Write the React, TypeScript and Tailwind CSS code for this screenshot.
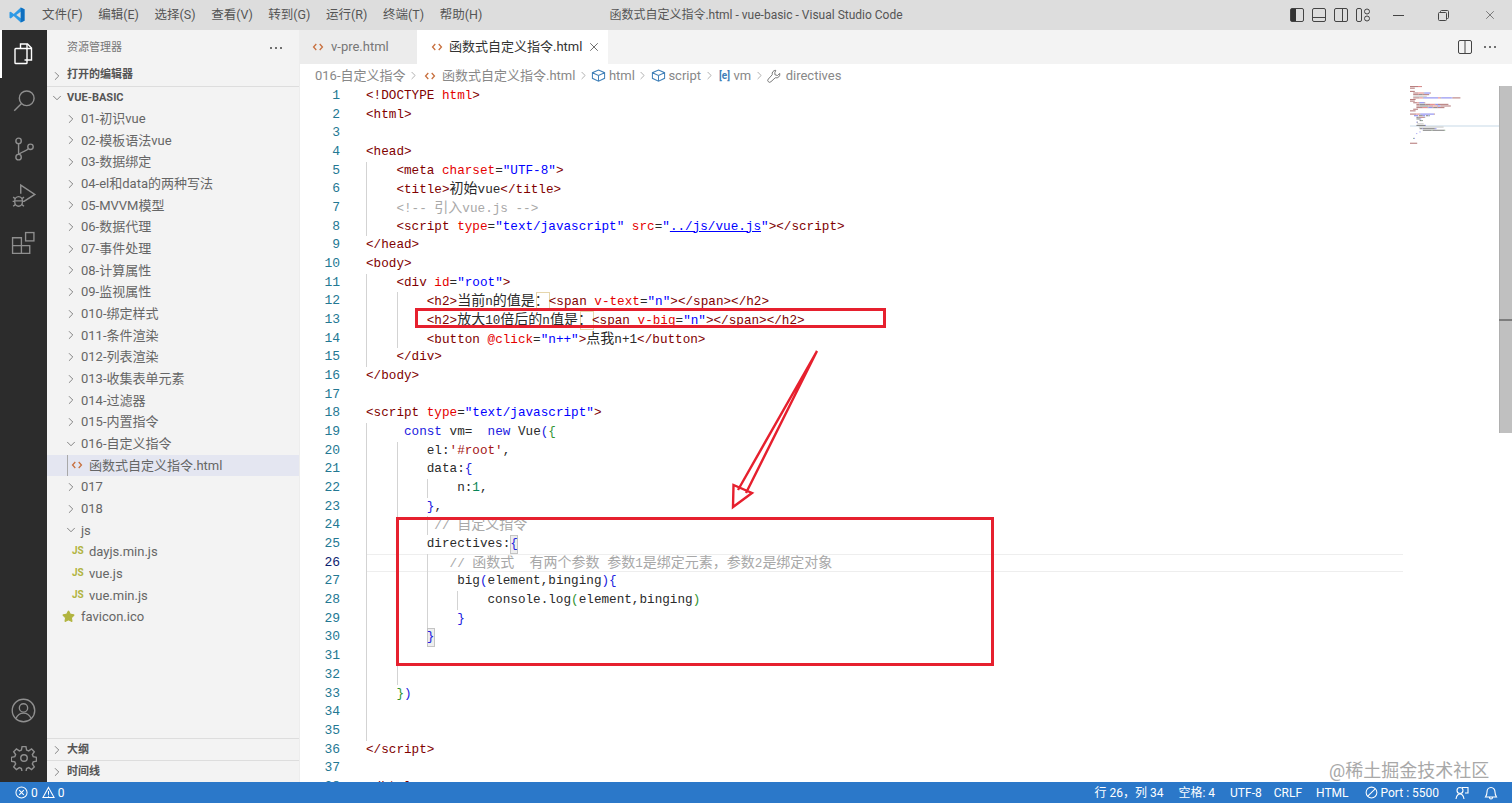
import { ChevronDown, ChevronRight, Star, X } from 'lucide-react';

const TAG = 'text-[#800000]';
const ATTR = 'text-[#e50000]';
const VAL = 'text-[#0000ff]';
const TXT = 'text-[#2a2a2a]';
const COM = 'text-[#a8a8a8]';
const KW = 'text-[#2020e0]';
const STR = 'text-[#a31515]';
const NUM = 'text-[#098658]';
const GRN = 'text-[#319331]';
const LNK = 'text-[#0000ff] underline';

type Tok = [string, string];
type Line = { t?: Tok[]; g?: number[]; box?: 'colon12' | 'colon13' | 'open' | 'close'; cur?: boolean };

const codeLines: Line[] = [
  { t: [['<!DOCTYPE ', TAG], ['html', ATTR], ['>', TAG]] },
  { t: [['<html>', TAG]] },
  {},
  { t: [['<head>', TAG]] },
  { g: [0], t: [['    <meta ', TAG], ['charset', ATTR], ['=', TXT], ['"UTF-8"', VAL], ['>', TAG]] },
  { g: [0], t: [['    <title>', TAG], ['初始vue', TXT], ['</title>', TAG]] },
  { g: [0], t: [['    <!-- 引入vue.js -->', COM]] },
  { g: [0], t: [['    <script ', TAG], ['type', ATTR], ['=', TXT], ['"text/javascript" ', VAL], ['src', ATTR], ['=', TXT], ['"', VAL], ['../js/vue.js', LNK], ['"', VAL], ['></script>', TAG]] },
  { t: [['</head>', TAG]] },
  { t: [['<body>', TAG]] },
  { g: [0], t: [['    <div ', TAG], ['id', ATTR], ['=', TXT], ['"root"', VAL], ['>', TAG]] },
  { g: [0, 31], box: 'colon12', t: [['        <h2>', TAG], ['当前n的值是：', TXT], ['<span ', TAG], ['v-text', ATTR], ['=', TXT], ['"n"', VAL], ['></span></h2>', TAG]] },
  { g: [0, 31], box: 'colon13', t: [['        <h2>', TAG], ['放大10倍后的n值是：', TXT], ['<span ', TAG], ['v-big', ATTR], ['=', TXT], ['"n"', VAL], ['></span></h2>', TAG]] },
  { g: [0, 31], t: [['        <button ', TAG], ['@click', ATTR], ['=', TXT], ['"n++"', VAL], ['>', TAG], ['点我n+1', TXT], ['</button>', TAG]] },
  { g: [0], t: [['    </div>', TAG]] },
  { t: [['</body>', TAG]] },
  {},
  { t: [['<script ', TAG], ['type', ATTR], ['=', TXT], ['"text/javascript"', VAL], ['>', TAG]] },
  { g: [0], t: [['     ', TXT], ['const', KW], [' vm=  ', TXT], ['new', KW], [' Vue', TXT], ['(', KW], ['{', GRN]] },
  { g: [0, 31], t: [['        el:', TXT], ["'#root'", STR], [',', TXT]] },
  { g: [0, 31], t: [['        data:', TXT], ['{', KW]] },
  { g: [0, 31, 61], t: [['            n:', TXT], ['1', NUM], [',', TXT]] },
  { g: [0, 31], t: [['        ', TXT], ['}', KW], [',', TXT]] },
  { g: [0, 31, 61], t: [['         // 自定义指令', COM]] },
  { g: [0, 31], box: 'open', t: [['        directives:', TXT], ['{', KW]] },
  { g: [0, 31, 61], cur: true, t: [['           // 函数式  有两个参数 参数1是绑定元素，参数2是绑定对象', COM]] },
  { g: [0, 31, 61], t: [['            big', TXT], ['(', KW], ['element,binging', TXT], [')', KW], ['{', KW]] },
  { g: [0, 31, 61, 91], t: [['                console.log', TXT], ['(', GRN], ['element,binging', TXT], [')', GRN]] },
  { g: [0, 31, 61], t: [['            ', TXT], ['}', KW]] },
  { g: [0, 31], box: 'close', t: [['        ', TXT], ['}', KW]] },
  { g: [0, 31] },
  { g: [0, 31] },
  { g: [0], t: [['    ', TXT], ['}', GRN], [')', KW]] },
  { g: [0] },
  { g: [0] },
  { t: [['</script>', TAG]] },
  {},
  { t: [['</html>', TAG]] },
];

const minimapColors: Record<string, string> = {
  [TAG]: '#b88080',
  [ATTR]: '#e88a8a',
  [VAL]: '#8a8af0',
  [TXT]: '#8a8a8a',
  [COM]: '#cccccc',
  [KW]: '#8a8af0',
  [STR]: '#c08a8a',
  [NUM]: '#80a890',
  [GRN]: '#80a880',
  [LNK]: '#8a8af0',
};

const boxes = {
  colon12: 'left-[170px] w-[14px] border-[#e6d6ac]',
  colon13: 'left-[214px] w-[14px] border-[#e6d6ac]',
  open: 'left-[144px] w-[8px] border-[#c4c4c4] bg-[#eeeeee]',
  close: 'left-[61px] w-[8px] border-[#c4c4c4] bg-[#eeeeee]',
};

const guideLeft: Record<number, string> = {
  0: 'left-0',
  31: 'left-[31px]',
  61: 'left-[61px]',
  91: 'left-[91px]',
};

function CodeText({ text, color }: { text: string; color: string }) {
  const parts = text.split(/([\u3400-\u9fff\u3000-\u303f\uff00-\uffef]+)/);
  return (
    <span className={color}>
      {parts.map((p, i) =>
        i % 2 === 1 ? (
          <span key={i} className="text-[14px]">
            {p}
          </span>
        ) : (
          p
        ),
      )}
    </span>
  );
}

function Angle({ className = '' }: { className?: string }) {
  return (
    <svg viewBox="0 0 14 14" className={`w-[12px] h-[12px] shrink-0 ${className}`} fill="none" stroke="#c8703f" strokeWidth="1.5">
      <path d="M5 3.5 1.8 7 5 10.5M9 3.5 12.2 7 9 10.5" />
    </svg>
  );
}

function Cube() {
  return (
    <svg viewBox="0 0 16 16" className="w-[15px] h-[15px] shrink-0 mr-[1px]" fill="none" stroke="#4080b8" strokeWidth="1.1">
      <path d="M8 2.2 14.5 5v6L8 14 1.5 11V5zM1.5 5 8 8l6.5-3M8 8v6" />
    </svg>
  );
}

function Crumb() {
  return <ChevronRight size={13} strokeWidth={1.2} className="text-[#888888] shrink-0" />;
}

function Dots() {
  return (
    <div className="flex gap-[3px]">
      <span className="w-[2px] h-[2px] rounded-full bg-[#444444]" />
      <span className="w-[2px] h-[2px] rounded-full bg-[#444444]" />
      <span className="w-[2px] h-[2px] rounded-full bg-[#444444]" />
    </div>
  );
}

function ExplorerFolder({ label, open }: { label: string; open?: boolean }) {
  return (
    <div className="h-[21.67px] flex items-center pl-[17px] text-[13px] text-[#666666]">
      {open ? (
        <ChevronDown size={14} strokeWidth={1.2} className="text-[#555555] shrink-0" />
      ) : (
        <ChevronRight size={14} strokeWidth={1.2} className="text-[#555555] shrink-0" />
      )}
      <span className="ml-[3px]">{label}</span>
    </div>
  );
}

function JsFile({ label }: { label: string }) {
  return (
    <div className="h-[21.67px] flex items-center pl-[25px] text-[13px] text-[#666666]">
      <span className="w-[17px] text-[10px] font-bold text-[#b1b43f] -mt-[2px]">JS</span>
      <span>{label}</span>
    </div>
  );
}

function SectionHead({ label, open, border }: { label: string; open?: boolean; border?: boolean }) {
  return (
    <div className={`h-[22px] shrink-0 flex items-center pl-[3px] pt-[1px] text-[11px] font-bold text-[#555555] ${border ? 'border-t border-[#dddddd]' : ''}`}>
      {open ? (
        <ChevronDown size={14} strokeWidth={1.2} className="text-[#555555] shrink-0" />
      ) : (
        <ChevronRight size={14} strokeWidth={1.2} className="text-[#555555] shrink-0" />
      )}
      <span className="ml-[3px]">{label}</span>
    </div>
  );
}

function ActivityIcon({ children, active }: { children: React.ReactNode; active?: boolean }) {
  return (
    <div className={`h-[47.5px] w-[47px] flex items-center justify-center ${active ? 'border-l-2 border-white pr-[2px]' : ''}`}>
      {children}
    </div>
  );
}

const folders1 = ['01-初识vue', '02-模板语法vue', '03-数据绑定', '04-el和data的两种写法', '05-MVVM模型', '06-数据代理', '07-事件处理', '08-计算属性', '09-监视属性', '010-绑定样式', '011-条件渲染', '012-列表渲染', '013-收集表单元素', '014-过滤器', '015-内置指令'];
const menus = ['文件(F)', '编辑(E)', '选择(S)', '查看(V)', '转到(G)', '运行(R)', '终端(T)', '帮助(H)'];

function Minimap() {
  return (
    <svg viewBox="0 0 90 66" className="absolute left-[1410px] top-[85px] w-[90px] h-[66px]">
      <rect x="0" y="40.2" width="90" height="1.6" fill="#dce8f0" />
      {codeLines.slice(0, 37).map((line, i) => {
        let x = 0;
        return (line.t ?? []).map(([text, color], j) => {
          const lead = text.length - text.trimStart().length;
          const r = (
            <rect key={`${i}-${j}`} x={x + lead * 0.8} y={i * 1.62 + 1} width={(text.length - lead) * 0.8} height={1.1} fill={minimapColors[color]} />
          );
          x += text.length * 0.8;
          return r;
        });
      })}
    </svg>
  );
}

export default function App() {
  return (
    <div className="relative w-full h-screen flex flex-col overflow-hidden bg-white font-['Roboto','Noto_Sans_CJK_SC',sans-serif]">
      {/* Title bar */}
      <div className="h-[30px] shrink-0 bg-[#dddddd] flex items-center relative">
        <svg viewBox="0 0 24 24" className="ml-[8px] w-[18px] h-[18px] shrink-0">
          <path d="M17 2 22 4.4v15.2L17 22 7.6 13.4 3.6 16.5 2 15.7V8.3l1.6-.8 4 3.1z" fill="#2f9ae6" />
          <path d="M17 7.6 11 12l6 4.4z" fill="#dddddd" />
          <path d="M17 2 22 4.4v15.2L17 22z" fill="#0f6fbf" />
        </svg>
        <div className="ml-[16px] flex gap-[15.6px] text-[12.5px] text-[#555555]">
          {menus.map((m) => (
            <span key={m}>{m}</span>
          ))}
        </div>
        <div className="absolute left-0 right-0 text-center text-[12px] text-[#555555]">函数式自定义指令.html - vue-basic - Visual Studio Code</div>
        <div className="ml-auto flex items-center text-[#444444]">
          <div className="flex items-center gap-[8px] mr-[23px]">
            <svg viewBox="0 0 14 14" className="w-[14px] h-[14px]" fill="none" stroke="currentColor">
              <rect x=".5" y=".5" width="13" height="13" rx="1.5" />
              <rect x="1" y="1" width="5" height="12" fill="#333333" stroke="none" />
            </svg>
            <svg viewBox="0 0 14 14" className="w-[14px] h-[14px]" fill="none" stroke="currentColor">
              <rect x=".5" y=".5" width="13" height="13" rx="1.5" />
              <path d="M1 9.5h12" />
            </svg>
            <svg viewBox="0 0 14 14" className="w-[14px] h-[14px]" fill="none" stroke="currentColor">
              <rect x=".5" y=".5" width="13" height="13" rx="1.5" />
              <path d="M8.5 1v12" />
            </svg>
            <svg viewBox="0 0 14 14" className="w-[14px] h-[14px]" fill="none" stroke="currentColor">
              <rect x=".5" y=".5" width="5" height="13" rx="1.5" />
              <circle cx="11" cy="3.5" r="2.5" />
              <circle cx="11" cy="10.5" r="2.5" />
            </svg>
          </div>
          <div className="w-[11px] h-[1px] bg-[#444444] mr-[34px]" />
          <svg viewBox="0 0 11 11" className="w-[11px] h-[11px] mr-[34px]" fill="none" stroke="currentColor">
            <rect x=".5" y="2.5" width="8" height="8" rx="1" />
            <path d="M2.5 2.5V1.5a1 1 0 0 1 1-1h6a1 1 0 0 1 1 1v6a1 1 0 0 1-1 1h-1" />
          </svg>
          <X size={14} strokeWidth={1.1} className="mr-[15px]" />
        </div>
      </div>

      <div className="flex-1 flex min-h-0">
        {/* Activity bar */}
        <div className="w-[47px] shrink-0 bg-[#2c2c2c] flex flex-col text-[#8f8f8f]">
          <div>
            <ActivityIcon active>
              <svg viewBox="0 0 24 24" className="w-[24px] h-[24px]" fill="none" stroke="#ffffff" strokeWidth="1.4">
                <path d="M8.5 6.5V2h7l4 4v12h-7" />
                <path d="M15 2v4.5h4.5" />
                <rect x="3" y="6.5" width="12" height="15" rx=".8" />
              </svg>
            </ActivityIcon>
            <ActivityIcon>
              <svg viewBox="0 0 24 24" className="w-[26px] h-[26px]" fill="none" stroke="currentColor" strokeWidth="1.3">
                <circle cx="14.5" cy="9.5" r="6.8" />
                <path d="M9.5 14.5 3 21" />
              </svg>
            </ActivityIcon>
            <ActivityIcon>
              <svg viewBox="0 0 24 24" className="w-[26px] h-[26px]" fill="none" stroke="currentColor" strokeWidth="1.3">
                <circle cx="7" cy="4.5" r="2.5" />
                <circle cx="7" cy="19.5" r="2.5" />
                <circle cx="18" cy="10" r="2.5" />
                <path d="M7 7v10M16 11.5c-1 2.5-5 2-9 5.5" />
              </svg>
            </ActivityIcon>
            <ActivityIcon>
              <svg viewBox="0 0 24 24" className="w-[26px] h-[26px]" fill="none" stroke="currentColor" strokeWidth="1.3">
                <path d="M9 10V2l13 8.5L12 17" />
                <ellipse cx="7" cy="17" rx="3.6" ry="4.4" />
                <path d="M4 14.5 2 13M10 14.5l2-1.5M3.5 17H1.5M10.5 17h2M4 20l-2 1.5M10 20l2 1.5M3.6 16.5h6.8" />
              </svg>
            </ActivityIcon>
            <ActivityIcon>
              <svg viewBox="0 0 24 24" className="w-[25px] h-[25px]" fill="none" stroke="currentColor" strokeWidth="1.3">
                <path d="M1.5 6.5h8.5v15H1.5zM1.5 14h16.5v7.5H10" />
                <rect x="14" y="1.5" width="8" height="8" />
              </svg>
            </ActivityIcon>
          </div>
          <div className="mt-auto">
            <ActivityIcon>
              <svg viewBox="0 0 24 24" className="w-[25px] h-[25px]" fill="none" stroke="currentColor" strokeWidth="1.3">
                <circle cx="12" cy="12" r="10.8" />
                <circle cx="12" cy="9.5" r="4" />
                <path d="M4.8 19.5c1.5-3.5 4-5 7.2-5s5.7 1.5 7.2 5" />
              </svg>
            </ActivityIcon>
            <ActivityIcon>
              <svg viewBox="0 0 24 24" className="w-[26px] h-[26px]" fill="none" stroke="currentColor" strokeWidth="1.3">
                <circle cx="12" cy="12" r="3" />
                <path d="M10.2 1.5h3.6l.6 3.2 1.9.8 2.7-1.8 2.5 2.5-1.8 2.7.8 1.9 3 .6v3.6l-3 .6-.8 1.9 1.8 2.7-2.5 2.5-2.7-1.8-1.9.8-.6 3h-3.6l-.6-3-1.9-.8-2.7 1.8-2.5-2.5 1.8-2.7-.8-1.9-3.2-.6v-3.6l3.2-.6.8-1.9-1.8-2.7 2.5-2.5 2.7 1.8 1.9-.8z" />
              </svg>
            </ActivityIcon>
          </div>
        </div>

        {/* Sidebar */}
        <div className="w-[252px] shrink-0 bg-[#f3f3f3] flex flex-col">
          <div className="h-[34px] shrink-0 flex items-center justify-between pl-[20px] pr-[17px] pt-[2px] text-[11px] text-[#777777]">
            <span>资源管理器</span>
            <Dots />
          </div>
          <SectionHead label="打开的编辑器" />
          <SectionHead label="VUE-BASIC" open border />
          <div className="flex-1 min-h-0 overflow-hidden">
            {folders1.map((f) => (
              <ExplorerFolder key={f} label={f} />
            ))}
            <ExplorerFolder label="016-自定义指令" open />
            <div className="relative h-[21.67px] flex items-center pl-[24px] text-[13px] text-[#666666] bg-[#e4e6f1]">
              <span className="absolute left-[20px] top-0 bottom-0 w-px bg-[#a8a8a8]" />
              <Angle className="mr-[6px]" />
              <span>函数式自定义指令.html</span>
            </div>
            <ExplorerFolder label="017" />
            <ExplorerFolder label="018" />
            <ExplorerFolder label="js" open />
            <JsFile label="dayjs.min.js" />
            <JsFile label="vue.js" />
            <JsFile label="vue.min.js" />
            <div className="h-[21.67px] flex items-center pl-[15px] text-[13px] text-[#666666]">
              <Star size={13} fill="#b1b43f" stroke="#b1b43f" className="mr-[6px] -mt-[1px]" />
              <span>favicon.ico</span>
            </div>
          </div>
          <SectionHead label="大纲" border />
          <SectionHead label="时间线" border />
        </div>

        {/* Editor column */}
        <div className="flex-1 min-w-0 flex flex-col border-l border-[#ededed]">
          <div className="h-[34px] shrink-0 bg-[#f3f3f3] flex items-stretch">
            <div className="w-[117px] bg-[#ececec] flex items-center pl-[12px] text-[13px] text-[#777777]">
              <Angle className="mr-[7px]" />
              <span>v-pre.html</span>
            </div>
            <div className="w-[191px] bg-white flex items-center pl-[14px] text-[13px] text-[#333333]">
              <Angle className="mr-[6px]" />
              <span>函数式自定义指令.html</span>
              <X size={14} strokeWidth={1.3} className="ml-[5px] text-[#424242]" />
            </div>
            <div className="ml-auto flex items-center pr-[16px]">
              <svg viewBox="0 0 14 14" className="w-[14px] h-[14px] text-[#444444] mr-[12px]" fill="none" stroke="currentColor">
                <rect x=".5" y=".5" width="13" height="13" rx="1.5" />
                <path d="M7 1v12" />
              </svg>
              <Dots />
            </div>
          </div>

          <div className="h-[23px] shrink-0 flex items-center pl-[15px] gap-[1.5px] text-[13px] text-[#888888] whitespace-nowrap">
            <span>016-自定义指令</span>
            <Crumb />
            <Angle className="ml-[2px] mr-[5px]" />
            <span>函数式自定义指令.html</span>
            <Crumb />
            <Cube />
            <span>html</span>
            <Crumb />
            <Cube />
            <span>script</span>
            <Crumb />
            <span className="text-[10px] font-bold text-[#4080b8] mx-[2px]">[e]</span>
            <span>vm</span>
            <Crumb />
            <svg viewBox="0 0 16 16" className="w-[14px] h-[14px] shrink-0" fill="none" stroke="#666666" strokeWidth="1">
              <path d="M10 1.5a4 4 0 0 0-4 5L1.5 11.5a2 2 0 0 0 3 3L9.5 10a4 4 0 0 0 5-5l-2.5 2.5-3-1V4z" />
            </svg>
            <span className="ml-[3px]">directives</span>
          </div>

          {/* Code */}
          <div className="flex-1 min-h-0 overflow-hidden font-['Liberation_Mono','Noto_Sans_CJK_SC',monospace] text-[12.67px]">
            {codeLines.map((line, i) => (
              <div key={i} className="h-[18.68px] flex leading-[18.68px]">
                <div className={`w-[40px] shrink-0 text-right text-[13px] ${line.cur ? 'text-[#0b216f]' : 'text-[#237893]'}`}>{i + 1}</div>
                <div className="relative flex-1 ml-[26px] whitespace-pre">
                  {line.cur && <span className="absolute left-0 top-0 bottom-0 w-[1037px] border-y border-[#eeeeee]" />}
                  {line.g?.map((g) => (
                    <span key={g} className={`absolute top-0 bottom-0 w-px bg-[#d3d3d3] ${guideLeft[g]}`} />
                  ))}
                  {line.box && <span className={`absolute top-0 bottom-0 border ${boxes[line.box]}`} />}
                  <span className="relative">
                    {line.t?.map(([text, color], j) => (
                      <CodeText key={j} text={text} color={color} />
                    ))}
                  </span>
                </div>
              </div>
            ))}
          </div>
        </div>
      </div>

      {/* Status bar */}
      <div className="h-[21px] shrink-0 bg-[#2b78c9] flex items-center text-white text-[12px] relative">
        <div className="ml-[15px] flex items-center">
          <svg viewBox="0 0 14 14" className="w-[13px] h-[13px]" fill="none" stroke="currentColor" strokeWidth="1.1">
            <circle cx="7" cy="7" r="6" />
            <path d="M4.5 4.5l5 5M9.5 4.5l-5 5" />
          </svg>
          <span className="ml-[3px]">0</span>
          <svg viewBox="0 0 14 14" className="ml-[4px] w-[13px] h-[13px]" fill="none" stroke="currentColor" strokeWidth="1.1">
            <path d="M7 1.5 13 12.5H1zM7 5.5v4M7 10.5v1" />
          </svg>
          <span className="ml-[3px]">0</span>
        </div>
        <div className="ml-auto flex items-center">
          <span className="mr-[15px]">行 26，列 34</span>
          <span className="mr-[15px]">空格: 4</span>
          <span className="mr-[12px]">UTF-8</span>
          <span className="mr-[14px]">CRLF</span>
          <span className="mr-[16px]">HTML</span>
          <svg viewBox="0 0 14 14" className="w-[13px] h-[13px] mr-[3px]" fill="none" stroke="currentColor" strokeWidth="1.1">
            <circle cx="7" cy="7" r="5.8" />
            <path d="M3 11 11 3" />
          </svg>
          <span className="mr-[16px]">Port : 5500</span>
          <svg viewBox="0 0 14 14" className="w-[14px] h-[14px] mr-[15px]" fill="none" stroke="currentColor" strokeWidth="1.1">
            <circle cx="5" cy="4.5" r="3" />
            <path d="M1 13c.5-3 2-5 4-5s3.5 2 4 5M7 1.5h6v5.5h-3" />
          </svg>
          <svg viewBox="0 0 14 14" className="w-[14px] h-[14px] mr-[14px]" fill="none" stroke="currentColor" strokeWidth="1.1">
            <path d="M7 1.5c-2.5 0-4 2-4 4.5 0 2.5-.5 3.5-1.5 5h11c-1-1.5-1.5-2.5-1.5-5 0-2.5-1.5-4.5-4-4.5zM5.5 11.5c0 2 3 2 3 0" />
          </svg>
        </div>
      </div>

      {/* Overlays: minimap, scrollbar, screenshot annotations, watermark */}
      <Minimap />
      <div className="absolute left-[1499px] top-[86px] w-[13px] h-[347px] bg-[#c0c0c0] border-l border-[#b0b0b0]" />
      <div className="absolute left-[1499px] top-[319px] w-[13px] h-[2px] bg-[#7d7d7d]" />
      <div className="absolute left-[415px] top-[308px] w-[471px] h-[20px] border-[3px] border-[#e6202e]" />
      <div className="absolute left-[396px] top-[517px] w-[598px] h-[149px] border-[3px] border-[#e6202e]" />
      <svg viewBox="0 0 100 170" className="absolute left-[725px] top-[345px] w-[100px] h-[170px]" fill="none" stroke="#e6202e" strokeWidth="2.4">
        <path d="M92 6 13 145M92 6 21 148M8.5 140 8 162 27 148z" />
      </svg>
      <div className="absolute left-[1329px] top-[758px] text-[18px] leading-[26px] text-[#a8a8a8]">@稀土掘金技术社区</div>
    </div>
  );
}
